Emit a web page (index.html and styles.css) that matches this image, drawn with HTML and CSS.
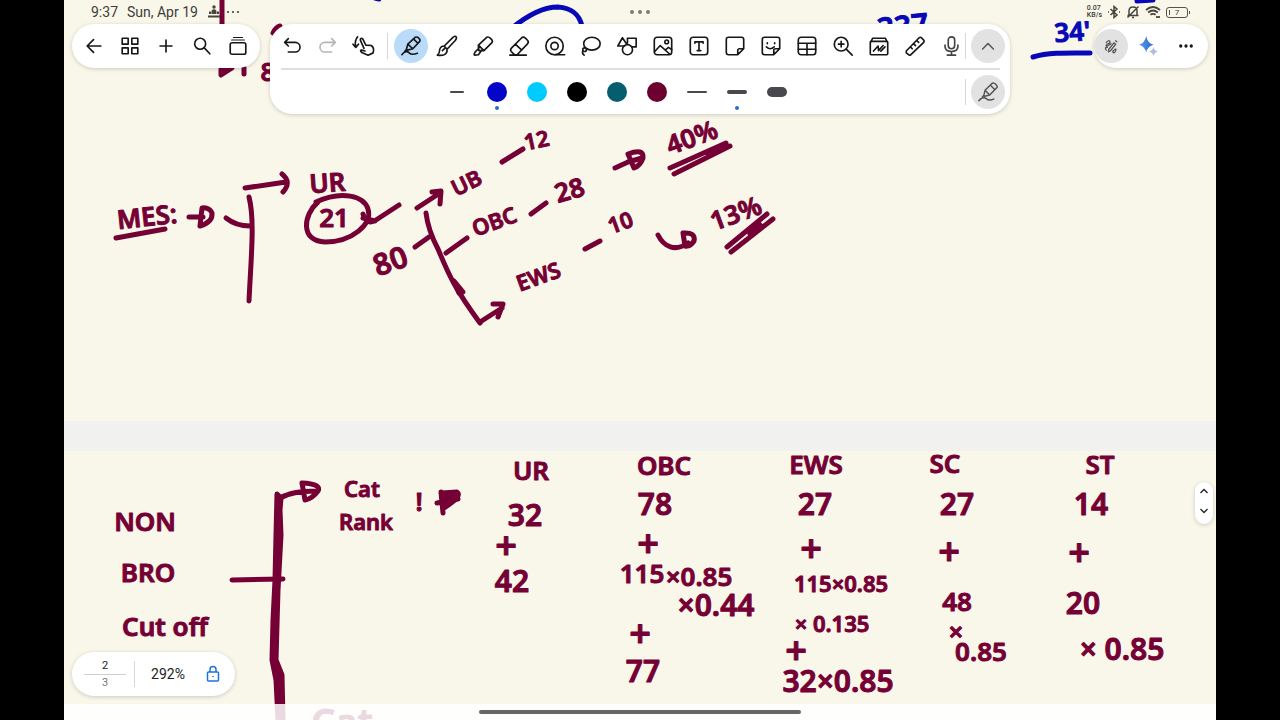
FILE: index.html
```html
<!DOCTYPE html>
<html lang="en">
<head>
<meta charset="utf-8">
<meta name="viewport" content="width=device-width, initial-scale=1">
<title>Notes</title>
<link rel="stylesheet" href="styles.css">
</head>
<body>
<main class="app">
  <div class="paper" aria-hidden="true">
    <div class="page page-top"></div>
    <div class="page-gap"></div>
    <div class="page page-bottom"></div>
  </div>

  <svg class="ink" viewBox="64 0 1152 720" role="img" aria-label="Handwritten notes">
    <!-- previous lines, partly under the toolbars -->
    <g class="stroke blue">
      <path d="M512 28C528 15 544 7 558 7 572 8 579 14 582 26"/>
      <path d="M1033 57C1050 52 1070 53 1090 53"/>
      <path d="M375-2L379-1M1137 1L1153 0"/>
    </g>
    <text class="l blue-ink" x="904" y="37" transform="rotate(-6 904 37)">337</text>
    <text class="m blue-ink" x="1073" y="41" transform="rotate(-4 1073 41)">34'</text>
    <g class="stroke maroon">
      <path d="M222 0V70M244 68V74M273 33Q276 27 280 26"/>
      <path class="solid" d="M221 69L232 68 221 75Z"/>
    </g>
    <text class="m" x="268" y="81">8</text>

    <!-- MES tree -->
    <g class="stroke maroon">
      <path d="M116 238L165 229"/>
      <path d="M189 217H203M202 208L200 226Q213 222 212 213 209 207 202 208Z"/>
      <path d="M226 218Q236 226 250 226"/>
      <path d="M249 197C255 220 251 258 249 301"/>
      <path d="M245 188L286 182M282 174Q292 182 283 192"/>
      <path d="M316 202C342 190 364 196 368 209 373 224 352 242 325 242 300 241 303 215 318 202"/>
      <path d="M363 214Q367 226 376 220L399 205M363 218L375 221"/>
      <path d="M417 208L440 193M432 192L441 191 440 204"/>
      <path d="M426 213Q428 230 438 249C447 270 452 285 480 323"/>
      <path d="M415 247L429 237M446 253L467 238"/>
      <path class="solid" d="M454 281L463 292 459 293Z"/>
      <path d="M480 322L502 308M493 304L503 304 498 317"/>
      <path d="M502 162L523 149M531 214L546 203M585 249L600 241"/>
      <path d="M615 168L628 162M628 154Q644 148 643 158 640 166 634 168ZM628 162L642 158"/>
      <path d="M670 168L726 143M674 174L730 146M708 154L722 148"/>
      <path d="M658 235C664 247 675 252 688 243M683 233Q696 232 694 241 690 247 685 246Z"/>
      <path d="M727 247L767 214M731 252L773 219M750 234L760 225"/>
    </g>
    <text class="m" x="148" y="226" transform="rotate(-6 148 226)">MES:</text>
    <text class="m" x="328" y="192" transform="rotate(-4 328 192)">UR</text>
    <text class="m" x="334" y="227">21</text>
    <text class="l" x="394" y="271" transform="rotate(-20 394 271)">80</text>
    <text class="s" x="470" y="190" transform="rotate(-26 470 190)">UB</text>
    <text class="s" x="538" y="148" transform="rotate(-12 538 148)">12</text>
    <text class="s" x="497" y="229" transform="rotate(-20 497 229)">OBC</text>
    <text class="m" x="572" y="199" transform="rotate(-16 572 199)">28</text>
    <text class="s" x="541" y="284" transform="rotate(-20 541 284)">EWS</text>
    <text class="s" x="623" y="230" transform="rotate(-20 623 230)">10</text>
    <text class="m" x="695" y="146" transform="rotate(-20 695 146)">40%</text>
    <text class="m" x="739" y="222" transform="rotate(-20 739 222)">13%</text>

    <!-- second page, heading column -->
    <g class="stroke maroon">
      <path class="solid" d="M277 494L281 498 280 510 281 535 278 590 276 660 282 675 283 720H278L276 680 272 660 273 620 275 580 276 535Z"/>
      <path d="M280 498Q292 491 316 491M302 483Q322 484 318 491 312 499 305 500Z"/>
      <path d="M232 580L283 579"/>
      <path d="M437 503L458 499M441 492L443 513"/>
      <path class="solid" d="M442 493L457 492Q463 496 444 508Z"/>
    </g>
    <text class="m" x="145" y="531">NON</text>
    <text class="m" x="148" y="582">BRO</text>
    <text class="m" x="165" y="636">Cut off</text>
    <text class="s" x="362" y="497">Cat</text>
    <text class="s" x="366" y="530">Rank</text>
    <text class="m" x="419" y="511">!</text>
    <text class="xl" x="342" y="736">Cat</text>

    <!-- second page, category columns -->
    <text class="m" x="531" y="480">UR</text>
    <text class="l" x="525" y="526">32</text>
    <text class="xl" x="506" y="559">+</text>
    <text class="l" x="512" y="592">42</text>

    <text class="m" x="664" y="475">OBC</text>
    <text class="l" x="655" y="515">78</text>
    <text class="xl" x="648" y="557">+</text>
    <text class="m" x="642" y="583">115</text>
    <text class="m" x="699" y="586">×0.85</text>
    <text class="l" x="716" y="616">×0.44</text>
    <text class="xl" x="640" y="647">+</text>
    <text class="l" x="643" y="682">77</text>

    <text class="m" x="816" y="474">EWS</text>
    <text class="l" x="815" y="515">27</text>
    <text class="xl" x="811" y="562">+</text>
    <text class="s" x="841" y="592">115×0.85</text>
    <text class="s" x="832" y="632">× 0.135</text>
    <text class="xl" x="796" y="664">+</text>
    <text class="l" x="838" y="692">32×0.85</text>

    <text class="m" x="945" y="473">SC</text>
    <text class="l" x="957" y="515">27</text>
    <text class="xl" x="949" y="565">+</text>
    <text class="m" x="957" y="611">48</text>
    <text class="m" x="956" y="641">×</text>
    <text class="m" x="981" y="661">0.85</text>

    <text class="m" x="1100" y="474">ST</text>
    <text class="l" x="1091" y="515">14</text>
    <text class="xl" x="1079" y="566">+</text>
    <text class="l" x="1083" y="614">20</text>
    <text class="l" x="1122" y="660">× 0.85</text>
  </svg>

  <div class="overlay">
    <header class="status">
      <div class="status-side">
        <time>9:37</time>
        <span class="date">Sun, Apr 19</span>
        <svg class="tiny" viewBox="0 0 12 14"><circle cx="6" cy="2" r="1.7"/><path d="M3.5 7Q3.500 4.300 6 4.300T8.500 7V9H3.500ZM1 9V6.500H3V9ZM9 9V6.500H11V9ZM0 10.500H12V12.500H0Z"/></svg>
        <svg class="dots" viewBox="0 0 14 4"><circle cx="2" cy="2" r="1.100"/><circle cx="7" cy="2" r="1.100"/><circle cx="12" cy="2" r="1.100"/></svg>
      </div>
      <svg class="grip" viewBox="0 0 20 4"><circle cx="2" cy="2" r="2"/><circle cx="10" cy="2" r="2"/><circle cx="18" cy="2" r="2"/></svg>
      <div class="status-side status-right">
        <span class="speed">0.07<br>KB/s</span>
        <svg class="sicon" viewBox="0 0 14 14"><path d="M3.500 4L10 10 7 12.500V1.500L10 4 3.500 10M1 7H2M12 7H13"/></svg>
        <svg class="sicon" viewBox="0 0 14 14"><path d="M3 10.500V6Q3 2 7 2 11 2 11 6V10.500M1.500 10.500H12.500M6 12.500H8M1.500 12.500L12.500 1.500"/></svg>
        <svg class="sicon wifi" viewBox="0 0 16 14"><path d="M1 5Q8-1 15 5M3.200 7.500Q8 3.500 12.800 7.500M5.400 9.800Q8 7.800 10.600 9.800M8 12V12.100M12 11V13M14 11V13"/></svg>
        <span class="battery">7</span>
      </div>
    </header>

    <div class="bars">
      <nav class="pill" aria-label="Document">
        <button class="tool" aria-label="Back"><svg viewBox="0 0 24 24"><path d="M19.500 12H4.500M11.500 5L4.500 12 11.500 19"/></svg></button>
        <button class="tool" aria-label="Pages"><svg viewBox="0 0 24 24"><path d="M3.500 3.500H10V10H3.500ZM14 3.500H20.500V10H14ZM3.500 14H10V20.500H3.500ZM14 14H20.500V20.500H14Z"/></svg></button>
        <button class="tool" aria-label="Add"><svg viewBox="0 0 24 24"><path d="M12 5.500V18.500M5.500 12H18.500"/></svg></button>
        <button class="tool" aria-label="Search"><svg viewBox="0 0 24 24"><circle cx="10" cy="9.500" r="6"/><path d="M14.500 14L20.500 20.500"/></svg></button>
        <button class="tool" aria-label="Tabs"><svg viewBox="0 0 24 24"><rect x="3.500" y="8.500" width="17" height="12.500" rx="2"/><path class="fine" d="M5 5.500H19M7 2.700H17"/></svg></button>
      </nav>

      <section class="panel" aria-label="Drawing tools">
        <div class="row">
          <button class="tool" aria-label="Undo"><svg viewBox="0 0 24 24"><path d="M8 4L4 8 8 12M4 8H15.500A5 5 0 0 1 15.500 18.500H8"/></svg></button>
          <button class="tool faded" aria-label="Redo"><svg viewBox="0 0 24 24"><path d="M16 4L20 8 16 12M20 8H8.500A5 5 0 0 0 8.500 18.500H16"/></svg></button>
          <button class="tool" aria-label="Gesture"><svg viewBox="0 0 24 24"><path d="M5 2Q1.500 6 3 13M0 10L3 13.500 6 10M12 14.500L8 5.500Q8 3 10.500 4L14 11 20 11.500Q23.500 14 22 19.500L16.500 22 9.500 19Q7 16.500 9.500 16.500L13 17.500"/></svg></button>
          <span class="rule"></span>
          <button class="tool active" aria-label="Pen" aria-pressed="true"><svg viewBox="0 0 24 24"><path d="M7 15.500L8.500 10 16.500 2.500Q18.500 1.500 20.500 3.500T21.500 7L14 15 8 16.500ZM8.500 10L14 15M15 4.500L19.500 9M7 16L5 18M2 21.500C5 17.500 8 17.500 10 19.500S15 21.500 19 20"/></svg></button>
          <button class="tool" aria-label="Brush"><svg viewBox="0 0 24 24"><path d="M9 12L18.500 2.500Q21 .500 22 2T21 6L12 15.500ZM9 12Q5 12 4 16 4 20 1.500 22 9 23 11 20 12.500 18 12 15.500M7 17L10 14"/></svg></button>
          <button class="tool" aria-label="Highlighter"><svg viewBox="0 0 24 24"><path d="M7 11L16 2.500Q18 1.500 20.500 4T22 8L13 17 7.500 17ZM7 11L13 17M7 11V15L3.500 18.500Q1.500 21.500 3 22L7 21.500 10 17.500"/></svg></button>
          <button class="tool" aria-label="Eraser"><svg viewBox="0 0 24 24"><path d="M4 14L15 3Q17 1.500 19 3.500L21.500 6Q23 8 21 10L10 21.500H7L3.500 18Q2 16 4 14ZM8 10L15 16.500M2 22H20"/></svg></button>
          <button class="tool" aria-label="Tape"><svg viewBox="0 0 24 24"><circle cx="11.500" cy="12" r="9.500"/><circle cx="11.500" cy="12" r="4"/><path d="M12 21.500H22.500"/></svg></button>
          <button class="tool" aria-label="Lasso"><svg viewBox="0 0 24 24"><ellipse cx="13" cy="9.500" rx="9" ry="7"/><circle cx="5" cy="16" r="2"/><path d="M3 17.500Q2 20 4.500 22"/></svg></button>
          <button class="tool" aria-label="Shapes"><svg viewBox="0 0 24 24"><path d="M7 3L2 12H9.500M7 3L11 9M12.500 9V3.500H22V13H17.500"/><circle cx="12.500" cy="16" r="5.500"/></svg></button>
          <button class="tool" aria-label="Image"><svg viewBox="0 0 24 24"><rect x="2.500" y="2.500" width="19" height="19" rx="3"/><circle cx="16" cy="7.500" r="2"/><path d="M3 18L9 11.500 19.500 21M15 16L18 13.500 21.500 16"/></svg></button>
          <button class="tool" aria-label="Text"><svg viewBox="0 0 24 24"><rect x="2.500" y="2.500" width="19" height="19" rx="3"/><path d="M7.500 9V7.500H16.500V9M12 7.500V17M10 17H14"/></svg></button>
          <button class="tool" aria-label="Note"><svg viewBox="0 0 24 24"><path d="M15 21.500H5Q2.500 21.500 2.500 19V5Q2.500 2.500 5 2.500H19Q21.500 2.500 21.500 5V15ZM15 21.500V17Q15 15 17 15H21.500"/></svg></button>
          <button class="tool" aria-label="Sticker"><svg viewBox="0 0 24 24"><path d="M15 21.500H5Q2.500 21.500 2.500 19V5Q2.500 2.500 5 2.500H19Q21.500 2.500 21.500 5V15ZM15 21.500V17Q15 15 17 15H21.500M7 13Q11 17 15.500 13M8 8.500V9.500M16 8.500V9.500"/></svg></button>
          <button class="tool" aria-label="Table"><svg viewBox="0 0 24 24"><rect x="2.500" y="2.500" width="19" height="19" rx="3"/><path d="M2.500 9H21.500M2.500 15.500H21.500M12 9V21.500"/></svg></button>
          <button class="tool" aria-label="Zoom"><svg viewBox="0 0 24 24"><circle cx="10" cy="10" r="7.500"/><path d="M15.500 15.500L22 22M10 7V13M7 10H13"/></svg></button>
          <button class="tool" aria-label="Collection"><svg viewBox="0 0 24 24"><rect x="2.500" y="7" width="19" height="14.500" rx="1"/><path d="M3.500 7L5 3.500H19L20.500 7M6 17.500L11 12 11.500 17 16.500 11.500M14 17.500L18.500 13"/></svg></button>
          <button class="tool" aria-label="Ruler"><svg viewBox="0 0 24 24"><path d="M2.500 17.500L16.500 3Q18 2 19 3L21.500 5.500Q22.500 7 21.500 8L7.500 21.500Q6 22.500 5 21.500L2.500 19.500ZM7 13L9 15M10.500 9.500L12.500 11.500M14 6L16 8"/></svg></button>
          <button class="tool mic" aria-label="Record"><svg viewBox="0 0 24 24"><rect x="9" y="2" width="7" height="13" rx="3.500"/><path d="M5.500 11V13Q6 18 12.500 18T19.500 13V11M12.500 18V22M8 22H17"/></svg></button>
          <span class="rule tight"></span>
          <button class="round" aria-label="Collapse"><svg viewBox="0 0 24 24"><path d="M5.500 15.500L12 9 18.500 15.500"/></svg></button>
        </div>
        <hr class="divider">
        <div class="row">
          <div class="choices">
            <button class="choice" aria-label="Line style"><i class="line short"></i></button>
            <button class="choice picked" aria-label="Blue"><i class="swatch c-blue"></i></button>
            <button class="choice" aria-label="Cyan"><i class="swatch c-cyan"></i></button>
            <button class="choice" aria-label="Black"><i class="swatch c-black"></i></button>
            <button class="choice" aria-label="Teal"><i class="swatch c-teal"></i></button>
            <button class="choice" aria-label="Maroon"><i class="swatch c-maroon"></i></button>
            <button class="choice" aria-label="Thin"><i class="line"></i></button>
            <button class="choice picked" aria-label="Medium"><i class="line medium"></i></button>
            <button class="choice" aria-label="Thick"><i class="line thick"></i></button>
          </div>
          <span class="rule"></span>
          <button class="round" aria-label="Pen settings"><svg viewBox="0 0 24 24"><path d="M7 16L8.500 10 17 1.500Q19 .500 21.500 3T22.500 7L14 15.500 8 17ZM8.500 10L14 15.500M15 4L20 9M7 16L5 18.500M1 22.500C4 18.500 8 18 10 20S15 22 19 20.500"/></svg></button>
        </div>
      </section>

      <nav class="pill pill-right" aria-label="More">
        <button class="round" aria-label="Scribble"><svg class="scribble" viewBox="0 0 24 24"><path d="M8 18L17 6.500 20 9 11 20.500 7.500 22ZM20 3L22 5M4 6Q8 1 10 4T5 9Q2 13 6 12L12 8M4 19Q0 14 6 14M15 21Q22 14 20 20T15 22"/></svg></button>
        <button class="tool" aria-label="Assistant"><svg class="spark" viewBox="0 0 24 24"><defs><linearGradient id="spark"><stop offset="0" stop-color="#56a4ee"/><stop offset="1" stop-color="#2c62c9"/></linearGradient></defs><path fill="url(#spark)" d="M10 1Q11.500 9 18 10.500 11.500 12 10 19 8.500 12 2 10.500 8.500 9 10 1Z"/><path fill="#b3b9df" d="M18 13Q18.800 17 23 18 18.800 19 18 23 17.200 19 13 18 17.200 17 18 13Z"/></svg></button>
        <button class="tool" aria-label="Menu"><svg class="more" viewBox="0 0 24 24"><circle cx="5" cy="12" r="2.200"/><circle cx="12" cy="12" r="2.200"/><circle cx="19" cy="12" r="2.200"/></svg></button>
      </nav>
    </div>

    <div class="scroller">
      <button aria-label="Previous page"><svg viewBox="0 0 10 8"><path d="M1.500 6L5 2.500 8.500 6"/></svg></button>
      <button aria-label="Next page"><svg viewBox="0 0 10 8"><path d="M1.500 2L5 5.500 8.500 2"/></svg></button>
    </div>

    <div class="pager">
      <div class="count"><span>2</span><span class="total">3</span></div>
      <span class="rule"></span>
      <button class="zoom">292%</button>
      <button class="lock" aria-label="Lock zoom"><svg viewBox="0 0 14 18"><rect x="1.500" y="7" width="11" height="9" rx="1"/><path d="M4 7V4.500Q4 1.500 7 1.500T10 4.500V7M7 11V12"/></svg></button>
    </div>
    <footer class="home"><span class="handle"></span></footer>
  </div>
</main>
</body>
</html>
```

FILE: styles.css
```css
* { box-sizing: border-box; }
body { margin: 0; background: #000; font-family: Roboto, sans-serif; color: #222; }
button { border: 0; padding: 0; background: none; font: inherit; color: inherit; cursor: pointer; }
svg { display: block; }

.app { position: relative; min-height: 100vh; margin: 0 5%; overflow: hidden; display: grid; background: #f9f7e9; }
.paper, .overlay { grid-area: 1 / 1; display: flex; flex-direction: column; }
.page { background: #f9f7e9; }
.page-top { flex: 421; }
.page-gap { flex: 30; background: #f1f1f0; }
.page-bottom { flex: 269; }
.overlay { position: relative; min-width: 0; }

/* handwriting layer */
.ink { position: absolute; inset: 0; width: 100%; height: 100%; }
.ink text { font-family: "Noto Sans", sans-serif; font-weight: 600; fill: #750035; stroke: #750035; stroke-width: 1px; stroke-linejoin: round; text-anchor: middle; }
.ink .s { font-size: 22px; }
.ink .m { font-size: 26px; }
.ink .l { font-size: 30px; }
.ink .xl { font-size: 38px; }
.ink .blue-ink { fill: #0808b8; stroke: #0808b8; }
.stroke { fill: none; stroke-width: 5px; stroke-linecap: round; stroke-linejoin: round; }
.maroon { stroke: #750035; }
.blue { stroke: #0808b8; }
.solid { fill: #750035; }

/* status bar */
.status { height: 24px; padding: 0 27px; display: grid; grid-template-columns: 1fr auto 1fr; align-items: center; font-size: 13px; color: #3d3c38; }
.status-side { display: flex; align-items: center; }
.status-side time, .date { font-size: 14px; }
.status-right { justify-content: flex-end; gap: 5px; }
.date { margin: 0 10px 0 9px; }
.tiny { width: 12px; height: 14px; fill: #45443f; }
.dots { width: 14px; height: 4px; margin-left: 6px; fill: #45443f; }
.grip { width: 20px; height: 4px; fill: #7d7c76; }
.speed { font-size: 7px; line-height: 7px; font-weight: 500; }
.sicon { width: 14px; height: 14px; fill: none; stroke: #45443f; stroke-width: 1.5px; }
.wifi { width: 16px; stroke-width: 1.8px; }
.battery { position: relative; width: 22px; height: 11px; margin-right: 1px; border: 1px solid #55544e; border-radius: 3px; font-size: 8px; line-height: 9px; text-align: center; }
.battery::before { content: ""; position: absolute; left: 2px; top: 2px; width: 1px; height: 5px; background: #55544e; }
.battery::after { content: ""; position: absolute; right: -3px; top: 3px; width: 1px; height: 3px; background: #55544e; }

/* toolbars */
.bars { display: flex; align-items: flex-start; gap: 10px; padding: 0 8px; }
.pill, .panel, .pager, .scroller { background: #fff; box-shadow: 0 1px 4px rgba(0, 0, 0, .18); }
.pill { display: flex; align-items: center; height: 44px; padding: 0 4px; border-radius: 22px; }
.pill-right { margin-left: auto; gap: 2px; padding: 0 4px 0 0; }
.panel { border-radius: 22px; }
.row { display: flex; align-items: center; height: 44px; padding: 0 5px 0 4px; }
.tool { flex: none; display: grid; place-items: center; width: 36px; height: 36px; }
.tool svg { width: 22px; height: 22px; }
.tool svg, .round svg { fill: none; stroke: #171717; stroke-width: 1.8px; stroke-linecap: round; stroke-linejoin: round; overflow: visible; }
.tool .fine { stroke-width: 1.2px; }
.faded svg { stroke: #b5b5b5; }
.active { position: relative; }
.active::before { content: ""; position: absolute; inset: 1px; border-radius: 50%; background: #badafa; }
.active svg { position: relative; }
.mic svg { stroke: #444; }
.round { flex: none; display: grid; place-items: center; width: 34px; height: 34px; border-radius: 50%; background: #e2e2e3; }
.round svg { width: 20px; height: 20px; stroke: #555; }
.round .scribble { width: 14px; height: 14px; stroke-width: 2.2px; }
.tool .spark, .tool .more { stroke: none; }
.tool .more { width: 18px; fill: #171717; }
.rule { flex: none; width: 1px; height: 26px; margin: 0 5px; background: #d8d8d8; }
.tight { margin-left: -4px; }
.divider { height: 2px; margin: 0 10px 0 11px; border: 0; background: #dfdfe0; }
.choices { flex: 1; display: flex; justify-content: center; }
.choice { position: relative; display: grid; place-items: center; width: 40px; height: 40px; }
.swatch { width: 20px; height: 20px; border-radius: 50%; }
.c-blue { background: #0505c8; }
.c-cyan { background: #00cbff; }
.c-black { background: #000; }
.c-teal { background: #045e70; }
.c-maroon { background: #6c0030; }
.line { width: 20px; height: 2px; border-radius: 8px; background: #49484f; }
.short { width: 14px; }
.medium { height: 4px; }
.thick { height: 10px; }
.picked::after { content: ""; position: absolute; left: 18px; bottom: 2px; width: 4px; height: 4px; border-radius: 50%; background: #246fc5; }

/* page controls */
.scroller { position: absolute; right: 3px; top: 67%; width: 18px; padding: 4px 0 8px; display: grid; gap: 10px; justify-items: center; border-radius: 9px; }
.scroller button { display: block; }
.scroller svg { width: 10px; height: 10px; fill: none; stroke: #222; stroke-width: 1.3px; }
.pager { align-self: flex-start; display: flex; align-items: center; height: 44px; margin: auto 0 8px 8px; padding: 0 10px 0 12px; border-radius: 22px; }
.count { width: 42px; display: grid; font-size: 11px; line-height: 16px; text-align: center; }
.total { border-top: 1px solid #cfcfcf; color: #777; }
.pager .rule { margin: 0 8px; }
.zoom { width: 50px; font-size: 14px; }
.lock { display: grid; place-items: center; width: 24px; height: 30px; margin-left: 8px; }
.lock svg { width: 14px; height: 18px; fill: none; stroke: #1a73e0; stroke-width: 1.5px; }
.home { display: grid; place-items: center; height: 16px; background: rgba(255, 255, 255, .85); }
.handle { width: 28%; height: 4px; border-radius: 2px; background: #666; }
```
